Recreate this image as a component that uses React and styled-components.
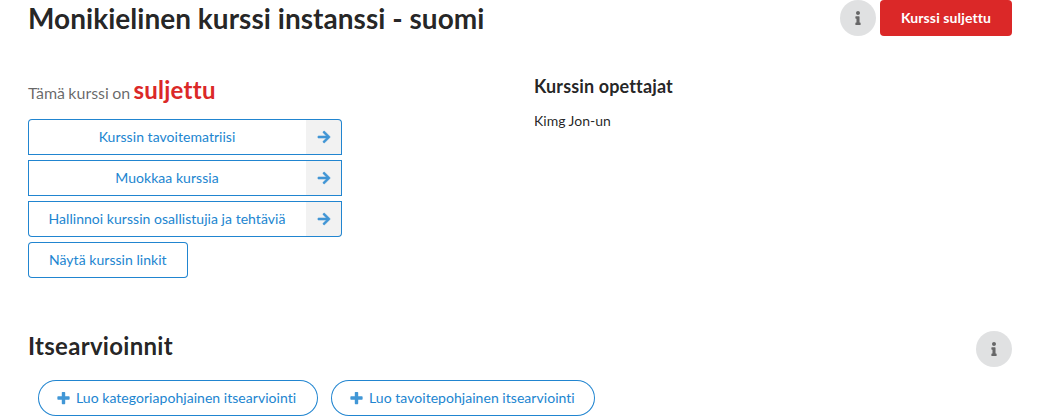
import React from 'react';
import styled, { createGlobalStyle } from 'styled-components';
import { FaArrowRight, FaInfo } from 'react-icons/fa';

const GlobalStyle = createGlobalStyle`
  *, *::before, *::after { box-sizing: border-box; }
  html { font-size: 14px; }
  body {
    margin: 0;
    background: #fff;
    color: rgba(0, 0, 0, 0.87);
    font-family: Lato, "Liberation Sans", sans-serif;
    font-size: 14px;
    line-height: 20px;
    overflow: hidden;
  }
  body, button { font-variant-ligatures: none; }
`;

const Page = styled.main`
  height: 416px;
  padding: 0 28px;
  overflow: hidden;
`;

const Bar = styled.header`
  display: flex;
  justify-content: space-between;
  height: 36px;
`;

const Title = styled.h1`
  margin: 0;
  font-size: 28px;
  line-height: 36px;
  letter-spacing: 0.03px;
`;

const SectionTitle = styled.h2`
  margin: 0;
  font-size: 24px;
  line-height: 30px;
  letter-spacing: 0.28px;
`;

const Actions = styled.div`
  display: flex;
  gap: 4px;
`;

const InfoButton = styled.button`
  display: flex;
  align-items: center;
  justify-content: center;
  width: 36px;
  height: 36px;
  padding: 0;
  border: 0;
  border-radius: 50%;
  background: #e0e1e2;
  color: rgba(0, 0, 0, 0.54);
  font-size: 14px;
`;

const StatusButton = styled.button`
  width: 132px;
  height: 36px;
  padding: 0;
  border: 0;
  border-radius: 4px;
  background: #db2828;
  color: #fff;
  font-family: Lato, sans-serif;
  font-weight: 700;
  font-size: 14px;
  line-height: 14px;
  letter-spacing: 0.12px;
`;

const Columns = styled.div`
  display: grid;
  grid-template-columns: 506px 1fr;
  height: 295px;
  padding-top: 38px;
`;

const Status = styled.p`
  margin: 0 0 14px;
  color: rgba(0, 0, 0, 0.6);
  font-size: 16px;
  line-height: 31px;
  height: 31px;
  word-spacing: -0.8px;
`;

const Closed = styled.strong`
  color: #db2828;
  font-size: 24px;
  letter-spacing: 0.25px;
`;

const LinkList = styled.nav`
  display: flex;
  flex-direction: column;
  align-items: flex-start;
  gap: 5px;
`;

const OutlineButton = styled.button`
  display: flex;
  align-items: center;
  height: 36px;
  padding: 0 21px;
  border: 0;
  border-radius: ${(p) => p.$radius || '4px'};
  background: transparent;
  box-shadow: inset 0 0 0 1px #2185d0;
  color: #2185d0;
  font-family: Lato, sans-serif;
  font-weight: 400;
  font-size: 14px;
  line-height: 14px;
  letter-spacing: 0.04px;
  white-space: nowrap;
`;

const ArrowButton = styled(OutlineButton)`
  width: 314px;
  padding: 0;
`;

const ArrowLabel = styled.span`
  flex: 1;
  text-align: center;
`;

const ArrowCell = styled.span`
  display: flex;
  align-items: center;
  justify-content: center;
  width: 35px;
  height: 34px;
  margin-right: 1px;
  padding-left: 1px;
  background: rgba(0, 0, 0, 0.05);

  svg {
    overflow: visible;
    stroke-width: 18px;
    opacity: 0.85;
  }
`;

const TeachersTitle = styled.h3`
  margin: 0 0 14px;
  padding-top: 1px;
  font-size: 18px;
  line-height: 22px;
  letter-spacing: 0.14px;
`;

const CreateRow = styled.div`
  display: flex;
  gap: 13px;
  padding: 13px 10px 0;
`;

const CreateButton = styled(OutlineButton)`
  width: ${(p) => p.$width};
  padding: 0 0 0 19px;
`;

const PlusGlyph = styled.svg`
  width: 13px;
  height: 14px;
  margin-right: 6px;
  fill: currentColor;
  opacity: 0.85;
`;

const Plus = () => (
  <PlusGlyph viewBox="0 0 448 512">
    <path d="M448 294.2v-76.4c0-13.3-10.7-24-24-24H286.2V56c0-13.3-10.7-24-24-24h-76.4c-13.3 0-24 10.7-24 24v137.8H24c-13.3 0-24 10.7-24 24v76.4c0 13.3 10.7 24 24 24h137.8V456c0 13.3 10.7 24 24 24h76.4c13.3 0 24-10.7 24-24V318.2H424c13.3 0 24-10.7 24-24z" />
  </PlusGlyph>
);

const links = [
  { label: 'Kurssin tavoitematriisi', radius: '4px 4px 0 0' },
  { label: 'Muokkaa kurssia', radius: '0' },
  { label: 'Hallinnoi kurssin osallistujia ja tehtäviä', radius: '0 0 4px 4px' },
];

export default function App() {
  return (
    <>
      <GlobalStyle />
      <Page>
        <Bar>
          <Title>Monikielinen kurssi instanssi - suomi</Title>
          <Actions>
            <InfoButton><FaInfo /></InfoButton>
            <StatusButton>Kurssi suljettu</StatusButton>
          </Actions>
        </Bar>
        <Columns>
          <section>
            <Status>Tämä kurssi on <Closed>suljettu</Closed></Status>
            <LinkList>
              {links.map(({ label, radius }) => (
                <ArrowButton key={label} $radius={radius}>
                  <ArrowLabel>{label}</ArrowLabel>
                  <ArrowCell><FaArrowRight /></ArrowCell>
                </ArrowButton>
              ))}
              <OutlineButton>Näytä kurssin linkit</OutlineButton>
            </LinkList>
          </section>
          <section>
            <TeachersTitle>Kurssin opettajat</TeachersTitle>
            <div>Kimg Jon-un</div>
          </section>
        </Columns>
        <Bar>
          <SectionTitle>Itsearvioinnit</SectionTitle>
          <InfoButton><FaInfo /></InfoButton>
        </Bar>
        <CreateRow>
          <CreateButton $radius="18px" $width="280px"><Plus />Luo kategoriapohjainen itsearviointi</CreateButton>
          <CreateButton $radius="18px" $width="264px"><Plus />Luo tavoitepohjainen itsearviointi</CreateButton>
        </CreateRow>
      </Page>
    </>
  );
}
